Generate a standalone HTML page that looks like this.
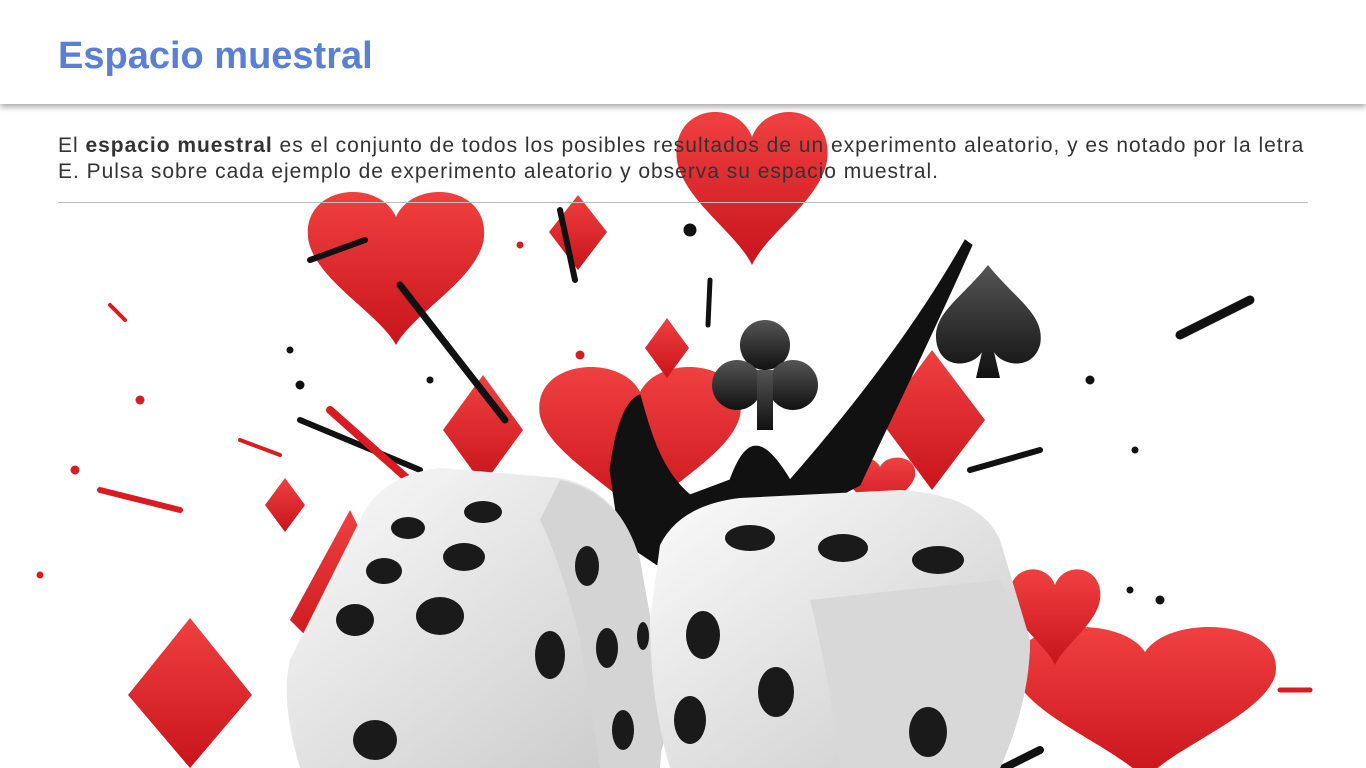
<!DOCTYPE html>
<html><head><meta charset="utf-8"><style>
html,body{margin:0;padding:0;width:1366px;height:768px;overflow:hidden;background:#fff;font-family:"Liberation Sans",Arial,sans-serif}
#hdr{position:absolute;left:0;top:0;width:1366px;height:104px;background:#fff;box-shadow:0 3px 6px rgba(0,0,0,.35);z-index:3}
#hdr h1{position:absolute;left:58px;top:35px;margin:0;font-size:38px;font-weight:bold;color:#5b80d2;letter-spacing:0px}
#txt{position:absolute;left:58px;top:133px;width:1300px;font-size:21px;line-height:26px;color:#333;z-index:2;letter-spacing:0.98px;white-space:nowrap}
#line{position:absolute;left:58px;top:202px;width:1250px;height:1px;background:#bdbdbd;z-index:2}
svg{position:absolute;left:0;top:0;z-index:1}
</style></head><body>
<div id="hdr"><h1>Espacio muestral</h1></div>
<div id="txt">El <b>espacio muestral</b> es el conjunto de todos los posibles resultados de un experimento aleatorio, y es notado por la letra<br>E. Pulsa sobre cada ejemplo de experimento aleatorio y observa su espacio muestral.</div>
<div id="line"></div>
<svg width="1366" height="768" viewBox="0 0 1366 768">
<defs>
<linearGradient id="r" x1="0" y1="0" x2="0" y2="1"><stop offset="0" stop-color="#f04040"/><stop offset="1" stop-color="#c8141c"/></linearGradient>
<linearGradient id="d" x1="0" y1="0" x2="1" y2="1"><stop offset="0" stop-color="#fbfbfb"/><stop offset="1" stop-color="#c9c9c9"/></linearGradient>
<linearGradient id="k" x1="0" y1="0" x2="0" y2="1"><stop offset="0" stop-color="#555"/><stop offset="1" stop-color="#111"/></linearGradient>
<path id="heart" d="M0,-30 C-10,-55 -55,-50 -50,-15 C-45,10 -10,30 0,50 C10,30 45,10 50,-15 C55,-50 10,-55 0,-30Z"/>
</defs>
<use href="#heart" fill="url(#r)" transform="translate(396,265) scale(1.75,1.6)"/>
<use href="#heart" fill="url(#r)" transform="translate(752,185) scale(1.5,1.6)"/>
<use href="#heart" fill="url(#r)" transform="translate(640,440) scale(2,1.6)"/>
<use href="#heart" fill="url(#r)" transform="translate(1145,700) scale(2.6,1.6)"/>
<use href="#heart" fill="url(#r)" transform="translate(1055,615) scale(0.9,1)"/>
<use href="#heart" fill="url(#r)" transform="translate(880,485) scale(0.7,0.6)"/>
<g fill="url(#r)">
<polygon points="578,195 607,232 578,270 549,232"/>
<polygon points="667,318 689,348 667,378 645,348"/>
<polygon points="932,350 985,420 932,490 880,420"/>
<polygon points="483,375 523,430 483,485 443,430"/>
<polygon points="285,478 305,505 285,532 265,505"/>
<polygon points="190,618 252,695 190,768 128,695"/>
<polygon points="350,510 375,560 330,660 290,620"/>
</g>
<path d="M988,265 C960,300 930,315 937,345 C944,372 975,365 982,352 L976,378 L1000,378 L994,352 C1001,365 1032,372 1040,345 C1046,315 1016,300 988,265Z" fill="url(#k)"/>
<g fill="url(#k)"><circle cx="765" cy="345" r="25"/><circle cx="737" cy="385" r="25"/><circle cx="793" cy="385" r="25"/><rect x="757" y="370" width="16" height="60"/></g>
<g fill="#111" stroke="#111" stroke-linecap="round">
<path d="M610,470 C615,430 625,400 640,395 C650,430 660,470 690,495 L730,480 C745,440 760,430 790,480 C860,400 920,320 965,240 L972,245 C930,340 890,420 860,485 L680,580 L620,540Z"/>
<line x1="400" y1="285" x2="505" y2="420" stroke-width="7"/>
<line x1="310" y1="260" x2="365" y2="240" stroke-width="6"/>
<line x1="1180" y1="335" x2="1250" y2="300" stroke-width="9"/>
<line x1="970" y1="470" x2="1040" y2="450" stroke-width="6"/>
<line x1="300" y1="420" x2="420" y2="470" stroke-width="6"/>
<line x1="710" y1="280" x2="708" y2="325" stroke-width="5"/>
<line x1="560" y1="210" x2="575" y2="280" stroke-width="6"/>
<line x1="1000" y1="770" x2="1040" y2="750" stroke-width="8"/>
<circle cx="430" cy="380" r="3"/><circle cx="300" cy="385" r="4"/><circle cx="1090" cy="380" r="4"/><circle cx="1130" cy="590" r="3"/><circle cx="1160" cy="600" r="4"/><circle cx="290" cy="350" r="3"/><circle cx="1135" cy="450" r="3"/><circle cx="690" cy="230" r="6"/>
</g>
<g fill="#d81c22" stroke="#d81c22" stroke-linecap="round">
<line x1="100" y1="490" x2="180" y2="510" stroke-width="6"/>
<line x1="330" y1="410" x2="420" y2="490" stroke-width="8"/>
<line x1="240" y1="440" x2="280" y2="455" stroke-width="4"/>
<line x1="110" y1="305" x2="125" y2="320" stroke-width="4"/>
<line x1="1280" y1="690" x2="1310" y2="690" stroke-width="5"/>
<circle cx="140" cy="400" r="4"/><circle cx="40" cy="575" r="3"/><circle cx="75" cy="470" r="4"/><circle cx="580" cy="355" r="4"/><circle cx="520" cy="245" r="3"/>
</g>
<g>
<path d="M360,520 Q380,475 440,468 L560,478 Q620,490 640,560 L665,700 Q670,768 640,768 L300,768 Q280,700 290,660 Z" fill="url(#d)"/>
<path d="M560,480 Q620,492 640,560 L665,700 L660,768 L600,768 L580,640 Q560,560 540,520Z" fill="#d4d4d4"/>
<g fill="#1a1a1a"><ellipse cx="483" cy="512" rx="19" ry="11"/><ellipse cx="408" cy="528" rx="17" ry="11"/><ellipse cx="464" cy="557" rx="21" ry="14"/><ellipse cx="384" cy="571" rx="18" ry="13"/><ellipse cx="440" cy="616" rx="24" ry="19"/><ellipse cx="355" cy="620" rx="19" ry="16"/><ellipse cx="587" cy="566" rx="12" ry="20"/><ellipse cx="550" cy="655" rx="15" ry="24"/><ellipse cx="607" cy="648" rx="11" ry="20"/><ellipse cx="623" cy="730" rx="11" ry="20"/><ellipse cx="375" cy="740" rx="22" ry="20"/><ellipse cx="643" cy="636" rx="6" ry="14"/></g>
</g>
<g>
<path d="M660,545 Q680,505 740,498 L900,490 Q980,495 1000,540 L1030,640 Q1030,700 1000,768 L670,768 Q650,700 650,620Z" fill="url(#d)"/>
<path d="M810,600 Q900,590 1000,580 L1030,640 Q1030,700 1000,768 L840,768 Q830,680 810,600Z" fill="#d8d8d8"/>
<g fill="#1a1a1a"><ellipse cx="750" cy="538" rx="25" ry="13"/><ellipse cx="843" cy="548" rx="25" ry="14"/><ellipse cx="938" cy="560" rx="26" ry="14"/><ellipse cx="703" cy="635" rx="17" ry="24"/><ellipse cx="776" cy="692" rx="18" ry="25"/><ellipse cx="690" cy="720" rx="16" ry="24"/><ellipse cx="928" cy="732" rx="19" ry="25"/></g>
</g>
</svg>
</body></html>
